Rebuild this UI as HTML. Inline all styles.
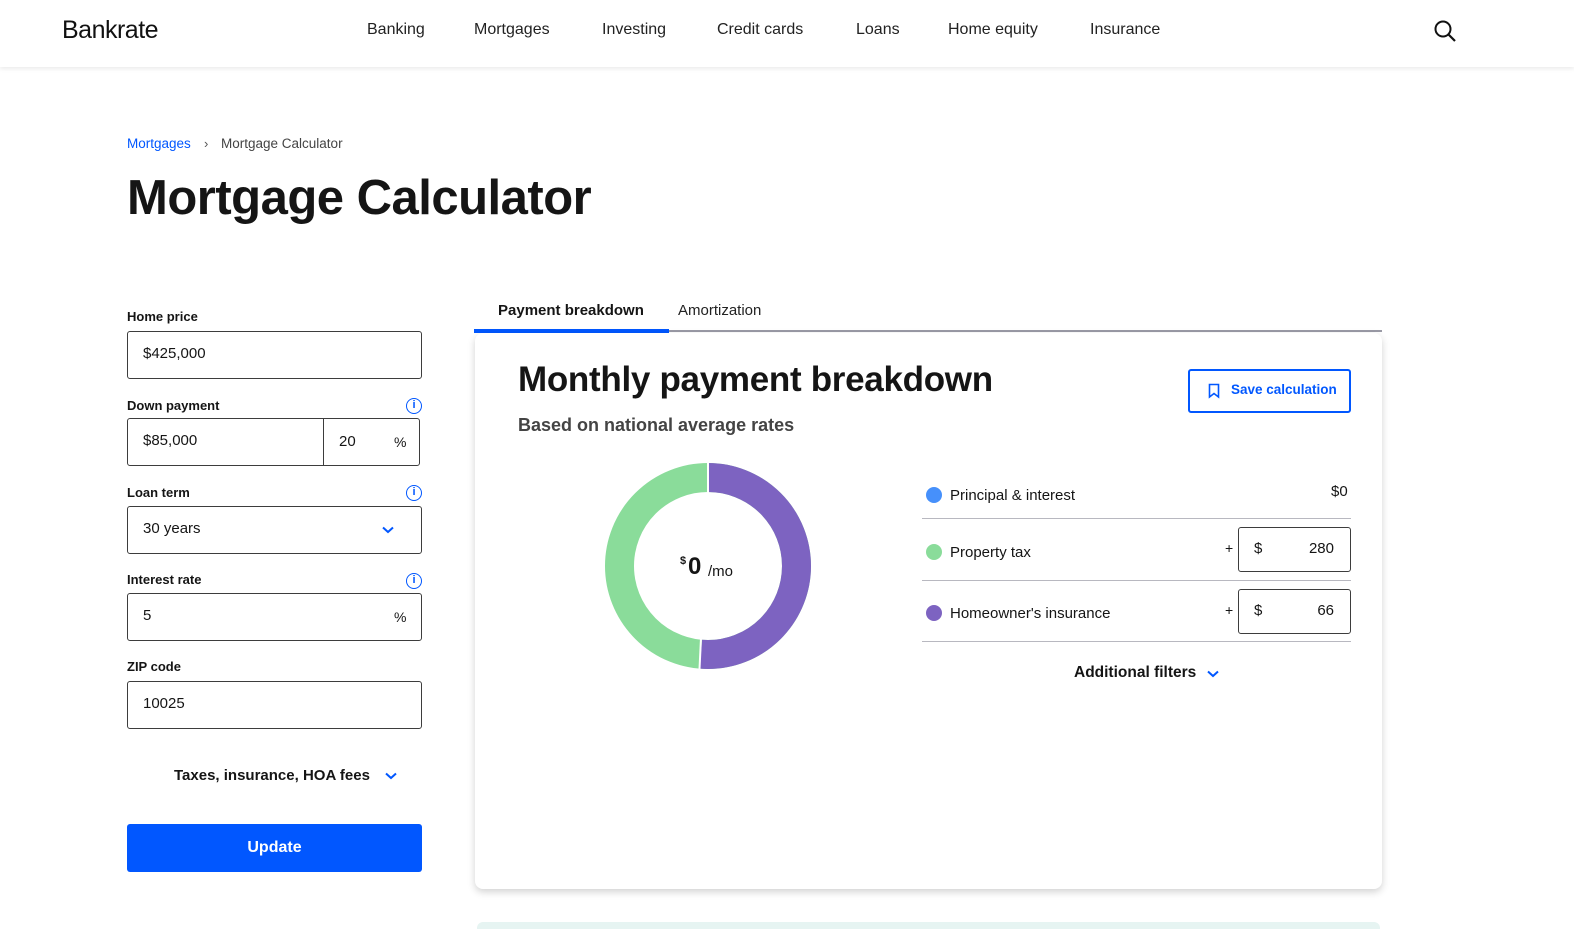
<!DOCTYPE html>
<html><head><meta charset="utf-8"><style>
*{box-sizing:border-box;margin:0;padding:0}
body{width:1574px;height:929px;background:#fff;font-family:"Liberation Sans",sans-serif;color:#151515;position:relative;overflow:hidden}
.a{position:absolute;white-space:nowrap}
.nav{position:absolute;left:0;top:0;width:1574px;height:67px;background:#fff;box-shadow:0 2px 4px rgba(0,0,0,.08)}
.nav span{position:absolute;top:21px;font-size:16px;color:#222}
.lbl{font-size:13px;font-weight:bold}
.inp{position:absolute;border:1px solid #3d3d3d;border-radius:3px;height:48px;font-size:15px;padding:13px 15px}
.info{position:absolute;width:16px;height:16px;border:1.5px solid #0157ff;border-radius:50%;color:#0157ff;font-size:11px;font-weight:bold;text-align:center;line-height:13px}
.card{position:absolute;left:475px;top:333px;width:907px;height:556px;background:#fff;border-radius:8px;box-shadow:0 3px 8px rgba(0,0,0,.18)}
.dot{position:absolute;width:16px;height:16px;border-radius:50%}
.row{font-size:15px}
.hr{position:absolute;left:922px;width:429px;height:1px;background:#b8b8c0}
.box{position:absolute;left:1238px;width:113px;height:45px;border:1px solid #3d3d3d;border-radius:3px;font-size:15px}
</style></head><body>
<div class="nav">
<span style="left:62px;top:16px;font-size:25px;color:#111;letter-spacing:-0.5px">Bankrate</span>
<span style="left:367px">Banking</span>
<span style="left:474px">Mortgages</span>
<span style="left:602px">Investing</span>
<span style="left:717px">Credit cards</span>
<span style="left:856px">Loans</span>
<span style="left:948px">Home equity</span>
<span style="left:1090px">Insurance</span>
<svg style="position:absolute;left:1433px;top:19px" width="24" height="24" viewBox="0 0 24 24"><circle cx="10" cy="10" r="7.5" fill="none" stroke="#111" stroke-width="2"/><path d="M15.5 15.5L22 22" stroke="#111" stroke-width="2.2"/></svg>
</div>
<div class="a" style="left:127px;top:136px;font-size:13.5px;color:#0157ff">Mortgages</div>
<div class="a" style="left:204px;top:136px;font-size:13px;color:#555">›</div>
<div class="a" style="left:221px;top:136px;font-size:13.5px;color:#444">Mortgage Calculator</div>
<div class="a" style="left:127px;top:170px;font-size:49px;font-weight:bold;letter-spacing:-0.5px">Mortgage Calculator</div>

<div class="a lbl" style="left:127px;top:309px">Home price</div>
<div class="inp" style="left:127px;top:331px;width:295px">$425,000</div>
<div class="a lbl" style="left:127px;top:398px">Down payment</div>
<div class="info" style="left:406px;top:398px">i</div>
<div class="inp" style="left:127px;top:418px;width:293px">$85,000</div>
<div class="a" style="left:323px;top:419px;width:1px;height:46px;background:#3d3d3d"></div>
<div class="a" style="left:339px;top:433px;font-size:15px">20</div>
<div class="a" style="left:394px;top:434px;font-size:14px">%</div>
<div class="a lbl" style="left:127px;top:485px">Loan term</div>
<div class="info" style="left:406px;top:485px">i</div>
<div class="inp" style="left:127px;top:506px;width:295px">30 years</div>
<svg style="position:absolute;left:382px;top:526px" width="12" height="8"><path d="M1 1.5L6 6L11 1.5" fill="none" stroke="#0157ff" stroke-width="2"/></svg>
<div class="a lbl" style="left:127px;top:572px">Interest rate</div>
<div class="info" style="left:406px;top:573px">i</div>
<div class="inp" style="left:127px;top:593px;width:295px">5</div>
<div class="a" style="left:394px;top:609px;font-size:14px">%</div>
<div class="a lbl" style="left:127px;top:659px">ZIP code</div>
<div class="inp" style="left:127px;top:681px;width:295px">10025</div>
<div class="a" style="left:174px;top:767px;font-size:15px;font-weight:bold">Taxes, insurance, HOA fees</div>
<svg style="position:absolute;left:385px;top:772px" width="12" height="8"><path d="M1 1.5L6 6L11 1.5" fill="none" stroke="#0157ff" stroke-width="2"/></svg>
<div class="a" style="left:127px;top:824px;width:295px;height:48px;background:#0157ff;border-radius:3px;color:#fff;font-weight:bold;font-size:16px;text-align:center;line-height:48px">Update</div>

<div class="a" style="left:498px;top:302px;font-size:15px;font-weight:bold">Payment breakdown</div>
<div class="a" style="left:678px;top:302px;font-size:15px;color:#222">Amortization</div>
<div class="a" style="left:474px;top:330px;width:908px;height:2px;background:#9a9aa6"></div>
<div class="a" style="left:474px;top:329px;width:195px;height:4px;background:#0157ff"></div>
<div class="card"></div>
<div class="a" style="left:518px;top:360px;font-size:35px;font-weight:bold;letter-spacing:-0.3px">Monthly payment breakdown</div>
<div class="a" style="left:518px;top:415px;font-size:18px;font-weight:bold;color:#444">Based on national average rates</div>
<div class="a" style="left:1188px;top:369px;width:163px;height:44px;border:2px solid #0157ff;border-radius:3px"></div>
<svg style="position:absolute;left:1208px;top:383px" width="12" height="16"><path d="M1.5 1.5H10.5V14L6 10.5L1.5 14Z" fill="none" stroke="#0157ff" stroke-width="1.6"/></svg>
<div class="a" style="left:1231px;top:382px;font-size:13.5px;font-weight:bold;color:#0157ff">Save calculation</div>

<svg style="position:absolute;left:600px;top:458px" width="216" height="216" viewBox="0 0 216 216">
<g transform="rotate(-90 108 108)">
<circle cx="108" cy="108" r="88.5" fill="none" stroke="#8adc9a" stroke-width="29"/>
<circle cx="108" cy="108" r="88.5" fill="none" stroke="#7d63c1" stroke-width="29" stroke-dasharray="285 600"/>
</g>
<line x1="108" y1="5" x2="108" y2="35" stroke="#fff" stroke-width="2"/>
<line x1="101" y1="180" x2="99.5" y2="211" stroke="#fff" stroke-width="2"/>
</svg>
<div class="a" style="left:680px;top:555px;font-size:11px;font-weight:bold">$</div>
<div class="a" style="left:688px;top:553px;font-size:24px;font-weight:bold">0</div>
<div class="a" style="left:708px;top:563px;font-size:15px">/mo</div>

<div class="dot" style="left:926px;top:487px;background:#4690fb"></div>
<div class="a row" style="left:950px;top:487px">Principal &amp; interest</div>
<div class="a row" style="left:1331px;top:483px">$0</div>
<div class="hr" style="top:518px"></div>
<div class="dot" style="left:926px;top:544px;background:#8adc9a"></div>
<div class="a row" style="left:950px;top:544px">Property tax</div>
<div class="a" style="left:1225px;top:540px;font-size:14px">+</div>
<div class="box" style="top:527px"><span class="a" style="left:15px;top:12px">$</span><span class="a" style="right:16px;top:12px">280</span></div>
<div class="hr" style="top:580px"></div>
<div class="dot" style="left:926px;top:605px;background:#7d63c1"></div>
<div class="a row" style="left:950px;top:605px">Homeowner's insurance</div>
<div class="a" style="left:1225px;top:602px;font-size:14px">+</div>
<div class="box" style="top:589px"><span class="a" style="left:15px;top:12px">$</span><span class="a" style="right:16px;top:12px">66</span></div>
<div class="hr" style="top:641px"></div>
<div class="a" style="left:1074px;top:664px;font-size:15.5px;font-weight:bold">Additional filters</div>
<svg style="position:absolute;left:1207px;top:670px" width="12" height="8"><path d="M1 1.5L6 6L11 1.5" fill="none" stroke="#0157ff" stroke-width="2"/></svg>
<div class="a" style="left:477px;top:922px;width:903px;height:7px;background:#e6f4f2;border-radius:6px 6px 0 0"></div>
</body></html>
